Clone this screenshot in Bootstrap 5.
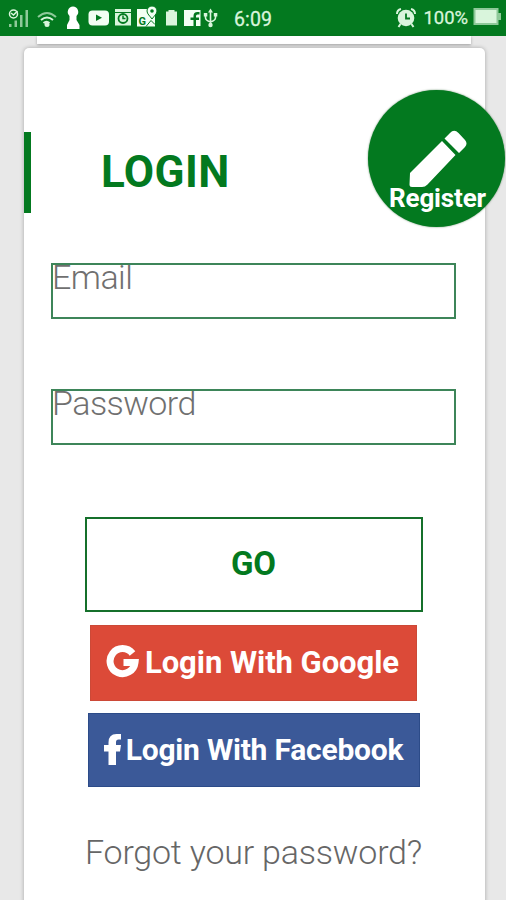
<!DOCTYPE html>
<html lang="en">
<head>
<meta charset="utf-8">
<meta name="viewport" content="width=device-width, initial-scale=1">
<title>Login</title>
<link href="https://cdn.jsdelivr.net/npm/bootstrap@5.3.0/dist/css/bootstrap.min.css" rel="stylesheet">
<style>
:root { --brand: #03791f; }
body { font-family: Roboto, sans-serif; background: #e8e8e8; height: 900px; overflow: hidden; line-height: 1; }
.status-bar { height: 36px; background: var(--brand); color: #d9f5dc; }
.status-bar svg { display: block; width: 100%; height: 36px; }
.status-bar text { font-family: Roboto, sans-serif; fill: #d9f5dc; }
.back-sheet { height: 8px; width: 434px; margin-left: 37px; background: #fff; box-shadow: 0 1px 3px rgba(0,0,0,.3); }
.login-sheet { width: 461px; height: 860px; margin: 4px 0 0 24px; border-radius: 5px; background: #fff; box-shadow: 0 0 4px rgba(0,0,0,.28); padding-top: 84px; }
.title-row { height: 81px; border-left: 7px solid var(--brand); padding-left: 70px; }
.title-row h1 { font-size: 44px; font-weight: 700; color: var(--brand); letter-spacing: .4px; }
.register { left: 344px; top: 42px; width: 137px; height: 137px; background: var(--brand); color: #fff; box-shadow: 0 0 2px rgba(0,70,10,.6); padding: 40px 0 0 1px; }
.register svg { width: 58px; height: 58px; flex: none; margin-left: 3px; overflow: visible; }
.register span { font-size: 26px; font-weight: 700; line-height: 28px; margin-top: -4px; margin-left: 1px; letter-spacing: -.15px; }
.fields { padding: 50px 29px 0 27px; gap: 70px; }
.fields .form-control { height: 56px; border: 2px solid #3d8559; border-radius: 0; padding: 0 0 28px 0; font-size: 34px; font-weight: 300; letter-spacing: -.55px; line-height: 26px; color: #555; text-indent: -1px; }
.fields .form-control::placeholder { color: #707070; opacity: 1; }
.actions { padding-top: 72px; width: 459px; }
.actions .btn { border-radius: 0; font-weight: 700; padding: 0; line-height: 1; white-space: nowrap; }
.btn.go { width: 338px; height: 95px; border: 2px solid #15702b; color: var(--brand); font-size: 33px; padding-bottom: 2px; }
.btn.google { width: 327px; height: 76px; margin-top: 13px; background: #dc4a38; color: #fff; font-size: 31px; border: 1px solid #cc4937; letter-spacing: -.05px; padding: 0 2px 2px 0; }
.btn.facebook { width: 332px; height: 74px; margin-top: 12px; background: #3b5998; color: #fff; font-size: 30px; border: 1px solid #2c4b88; letter-spacing: -.22px; padding: 0 0 1px; }
.forgot { font-size: 34px; font-weight: 300; letter-spacing: -.2px; color: #666; margin-top: 47px; line-height: 36px; }
</style>
</head>
<body>
<header class="status-bar">
<svg viewBox="0 0 506 36" fill="#d9f5dc" aria-label="Status bar">
  <g opacity=".65"><path d="M9 24h2.500v3H9zM14.500 20.500H17V27h-2.500zM20 15h2.500v12H20zM25.500 10H28v17h-2.500z"/></g>
  <circle cx="13.500" cy="14" r="4" fill="none" stroke="#d9f5dc" stroke-width="1.500"/><path d="M11 13l2.500 2 4-4" fill="none" stroke="#d9f5dc" stroke-width="1.500"/>
  <g fill="none" stroke="#d9f5dc" stroke-width="2"><path d="M38 17q9-8 18 0" opacity=".65"/><path d="M41 20q6-5 12 0M43.500 23q3-2.500 6 0"/></g><circle cx="47" cy="24.500" r="2.500"/>
  <path fill="#fff" d="M73 6.500a5.500 5.500 0 0 1 3.500 9.500v4l3 5v4H67v-4l2.500-5v-4A5.500 5.500 0 0 1 73 6.500z"/>
  <rect x="88.500" y="10.500" width="20.500" height="15" rx="4" fill="#f2fff3"/><path d="M96 14.500v6.500l6-3.200z" fill="#03791f"/>
  <path d="M115 9h16v3h-16zM115 13h16v12.500h-16z"/><circle cx="123" cy="18.500" r="4.500" fill="#d9f5dc" stroke="#03791f" stroke-width="1.800"/><path d="M123 15.500v3h2.500" fill="none" stroke="#03791f" stroke-width="1.500"/>
  <path fill="#f2fff3" d="M137 9h18v17.500h-18z"/><path d="M146 26.500l5-6 4 4" fill="none" stroke="#03791f"/><text x="138.500" y="24.500" font-size="11" font-weight="700" style="fill:#03791f">G</text><path d="M152 6a5 5 0 0 1 5 5c0 3-3 5-5 8-2-3-5-5-5-8a5 5 0 0 1 5-5z" fill="#f2fff3" stroke="#03791f"/><circle cx="152" cy="11" r="1.800" fill="#03791f"/>
  <path d="M168.500 10h6v1.500h2.500V25.500h-11V11.500h2.500z"/>
  <rect x="184" y="10" width="16.500" height="16" fill="#f2fff3"/><path d="M193.500 26v-6h-3v-2.500h3V16q0-4 4-4h2v2.500h-2q-1.500 0-1.500 1.500v1.500h3V20h-3v6z" fill="#03791f"/>
  <g fill="none" stroke="#d9f5dc" stroke-width="1.600"><path d="M210.500 12v13M205.500 15v2.500q0 3 5 4.500 5-1.500 5-4.500V15"/></g><path d="M210.500 8.500l2.500 4h-5zM203.800 13h3.500v3.500h-3.500zM213.800 13h3.500v3.500h-3.500z"/><circle cx="210.500" cy="25" r="2.200"/>
  <text x="234" y="25.500" font-size="19.500" textLength="38" stroke="#d9f5dc" stroke-width=".3">6:09</text>
  <circle cx="406" cy="18" r="8.300"/><path d="M397 14q0-4 4-5M415 14q0-4-4-5M400.500 24l-2 3M411.500 24l2 3" fill="none" stroke="#d9f5dc" stroke-width="2"/><path d="M406 13.500v5h4" fill="none" stroke="#03791f" stroke-width="1.800"/>
  <text x="423.500" y="24" font-size="18.500" textLength="44.500" stroke="#d9f5dc" stroke-width=".3">100%</text>
  <path d="M473.500 8h25v5h2.500v7h-2.500v5h-25z" opacity=".65"/><path d="M475.500 10h21v13h-21z"/>
</svg>
</header>
<div class="back-sheet"></div>
<main class="login-sheet position-relative">
  <div class="title-row d-flex align-items-center"><h1 class="mb-0">LOGIN</h1></div>
  <a href="#" class="register position-absolute rounded-circle d-flex flex-column align-items-center text-decoration-none">
    <svg viewBox="0 0 58 58" fill="currentColor" aria-hidden="true"><path d="M34.500 8.500L40 3q4-4.500 8.500 0l6.500 7q3 3.500 0 7l-6 6zM32 11l13.500 14L17.500 54.500Q15 57 12 57H2q-2.500 0-2.500-2.500L0 43z"/></svg>
    <span>Register</span>
  </a>
  <form class="fields d-flex flex-column">
    <input type="email" class="form-control" placeholder="Email" aria-label="Email">
    <input type="password" class="form-control" placeholder="Password" aria-label="Password">
  </form>
  <div class="actions d-flex flex-column align-items-center">
    <button class="btn go">GO</button>
    <button class="btn google d-flex align-items-center justify-content-center">
      <svg width="39" height="34" viewBox="0 0 39 34" aria-hidden="true"><path d="M26.500 8.500A12.500 12.500 0 1 0 29 17.500H17.500" fill="none" stroke="#fff" stroke-width="7"/></svg><span>Login With Google</span>
    </button>
    <button class="btn facebook d-flex align-items-center justify-content-center">
      <svg width="22" height="32" viewBox="0 0 22 32" fill="#fff" aria-hidden="true"><path d="M4.500 31V17.500H0V11h4.500V8.500q0-8.500 8-8.500H17v5.500h-2.500q-2.500 0-2.500 2.500v3h5l-1 6.500h-4V31z"/></svg><span>Login With Facebook</span>
    </button>
    <a href="#" class="forgot text-decoration-none">Forgot your password?</a>
  </div>
</main>
<script src="https://cdn.jsdelivr.net/npm/bootstrap@5.3.0/dist/js/bootstrap.bundle.min.js"></script>
</body>
</html>
